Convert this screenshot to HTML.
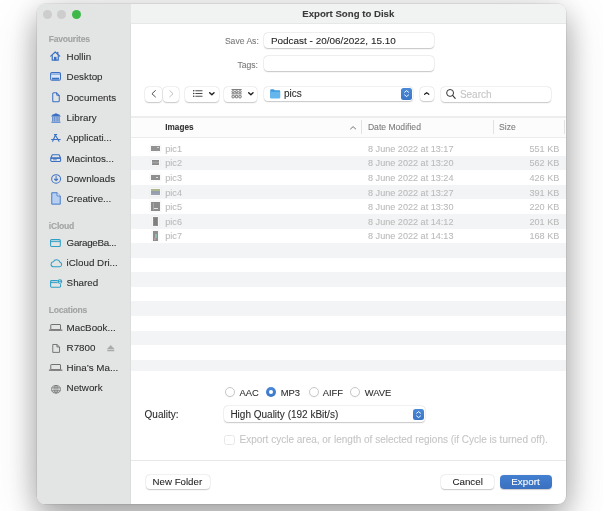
<!DOCTYPE html>
<html><head><meta charset="utf-8"><style>
html,body{margin:0;padding:0;}
body{width:603px;height:511px;position:relative;overflow:hidden;background:#fff;font-family:"Liberation Sans",sans-serif;}
.t{position:absolute;white-space:nowrap;}
#win{will-change:transform;}
.t{-webkit-text-stroke:0.08px currentColor;}
</style></head><body>
<div id="win" style="position:absolute;left:37px;top:4px;width:529px;height:500px;border-radius:8px;overflow:hidden;background:#fff;box-shadow:0 0 0 0.5px rgba(0,0,0,0.13), 0 0 34px rgba(0,0,0,0.08), 0 14px 30px rgba(0,0,0,0.28), 0 12px 56px rgba(0,0,0,0.12);">
<div style="position:absolute;left:-37px;top:-4px;width:603px;height:511px;">
<div style="position:absolute;left:37px;top:4px;width:94px;height:500px;background:#e3e4e4;"></div>
<div style="position:absolute;left:130px;top:24px;width:1px;height:480px;background:#dbdcdc;"></div>
<div style="position:absolute;left:131px;top:4px;width:435px;height:20px;background:#f1f2f2;border-bottom:1px solid #e6e7e7;box-sizing:border-box;"></div>
<div style="position:absolute;left:42.70px;top:9.80px;width:9.2px;height:9.2px;border-radius:50%;background:#cdcdcd;"></div>
<div style="position:absolute;left:57.00px;top:9.80px;width:9.2px;height:9.2px;border-radius:50%;background:#cdcdcd;"></div>
<div style="position:absolute;left:71.60px;top:9.80px;width:9.2px;height:9.2px;border-radius:50%;background:#3fb84a;"></div>
<div class="t" style="left:302.30px;top:9.33px;font-size:9.65px;line-height:9.65px;color:#3a3a3a;font-weight:bold;">Export Song to Disk</div>
<div class="t" style="left:48.80px;top:35.32px;font-size:8.6px;line-height:8.6px;color:#a2a3a3;font-weight:bold;letter-spacing:-0.25px;">Favourites</div>
<div class="t" style="left:48.80px;top:221.72px;font-size:8.6px;line-height:8.6px;color:#a2a3a3;font-weight:bold;letter-spacing:-0.25px;">iCloud</div>
<div class="t" style="left:48.80px;top:305.82px;font-size:8.6px;line-height:8.6px;color:#a2a3a3;font-weight:bold;letter-spacing:-0.25px;">Locations</div>
<div class="t" style="left:66.60px;top:51.80px;font-size:9.8px;line-height:9.8px;color:#2c2c2c;font-weight:normal;">Hollin</div>
<div class="t" style="left:66.60px;top:72.20px;font-size:9.8px;line-height:9.8px;color:#2c2c2c;font-weight:normal;">Desktop</div>
<div class="t" style="left:66.60px;top:92.70px;font-size:9.8px;line-height:9.8px;color:#2c2c2c;font-weight:normal;">Documents</div>
<div class="t" style="left:66.60px;top:112.90px;font-size:9.8px;line-height:9.8px;color:#2c2c2c;font-weight:normal;">Library</div>
<div class="t" style="left:66.60px;top:133.30px;font-size:9.8px;line-height:9.8px;color:#2c2c2c;font-weight:normal;">Applicati...</div>
<div class="t" style="left:66.60px;top:153.80px;font-size:9.8px;line-height:9.8px;color:#2c2c2c;font-weight:normal;">Macintos...</div>
<div class="t" style="left:66.60px;top:173.70px;font-size:9.8px;line-height:9.8px;color:#2c2c2c;font-weight:normal;">Downloads</div>
<div class="t" style="left:66.60px;top:194.40px;font-size:9.8px;line-height:9.8px;color:#2c2c2c;font-weight:normal;">Creative...</div>
<div class="t" style="left:66.60px;top:237.90px;font-size:9.8px;line-height:9.8px;color:#2c2c2c;font-weight:normal;letter-spacing:-0.3px;">GarageBa...</div>
<div class="t" style="left:66.60px;top:258.30px;font-size:9.8px;line-height:9.8px;color:#2c2c2c;font-weight:normal;">iCloud Dri...</div>
<div class="t" style="left:66.60px;top:278.40px;font-size:9.8px;line-height:9.8px;color:#2c2c2c;font-weight:normal;">Shared</div>
<div class="t" style="left:66.60px;top:322.50px;font-size:9.8px;line-height:9.8px;color:#2c2c2c;font-weight:normal;">MacBook...</div>
<div class="t" style="left:66.60px;top:342.80px;font-size:9.8px;line-height:9.8px;color:#2c2c2c;font-weight:normal;">R7800</div>
<div class="t" style="left:66.60px;top:363.00px;font-size:9.8px;line-height:9.8px;color:#2c2c2c;font-weight:normal;">Hina’s Ma...</div>
<div class="t" style="left:66.60px;top:383.30px;font-size:9.8px;line-height:9.8px;color:#2c2c2c;font-weight:normal;">Network</div>
<div class="t" style="left:224.90px;top:36.82px;font-size:8.6px;line-height:8.6px;color:#7a7a7a;font-weight:normal;">Save As:</div>
<div class="t" style="left:237.40px;top:60.52px;font-size:8.6px;line-height:8.6px;color:#7a7a7a;font-weight:normal;">Tags:</div>
<div style="position:absolute;left:264px;top:32.6px;width:169.5px;height:15px;background:#fff;border-radius:4px;box-shadow:0 0 0 0.5px rgba(0,0,0,0.07),0 0.6px 1.3px rgba(0,0,0,0.2);"></div>
<div style="position:absolute;left:264px;top:55.6px;width:169.5px;height:15px;background:#fff;border-radius:4px;box-shadow:0 0 0 0.5px rgba(0,0,0,0.07),0 0.6px 1.3px rgba(0,0,0,0.2);"></div>
<div class="t" style="left:270.90px;top:35.68px;font-size:9.95px;line-height:9.95px;color:#1f1f1f;font-weight:normal;">Podcast - 20/06/2022, 15.10</div>
<div style="position:absolute;left:145.4px;top:86.5px;width:16.6px;height:15px;background:#fff;border-radius:4px;box-shadow:0 0 0 0.5px rgba(0,0,0,0.06),0 0.6px 1.3px rgba(0,0,0,0.2);"></div>
<div style="position:absolute;left:162.7px;top:86.5px;width:16.8px;height:15px;background:#fff;border-radius:4px;box-shadow:0 0 0 0.5px rgba(0,0,0,0.06),0 0.6px 1.3px rgba(0,0,0,0.2);"></div>
<div style="position:absolute;left:185.3px;top:86.5px;width:33.4px;height:15px;background:#fff;border-radius:4px;box-shadow:0 0 0 0.5px rgba(0,0,0,0.06),0 0.6px 1.3px rgba(0,0,0,0.2);"></div>
<div style="position:absolute;left:224.1px;top:86.5px;width:33.4px;height:15px;background:#fff;border-radius:4px;box-shadow:0 0 0 0.5px rgba(0,0,0,0.06),0 0.6px 1.3px rgba(0,0,0,0.2);"></div>
<div style="position:absolute;left:263.6px;top:86.5px;width:149.5px;height:14.8px;background:#fff;border-radius:4px;box-shadow:0 0 0 0.5px rgba(0,0,0,0.06),0 0.6px 1.3px rgba(0,0,0,0.2);"></div>
<div style="position:absolute;left:400.9px;top:88.1px;width:11.1px;height:11.8px;background:linear-gradient(#4a88d8,#3a76c8);border-radius:2.5px;"></div>
<div style="position:absolute;left:420px;top:87px;width:14.2px;height:14px;background:#fff;border-radius:4px;box-shadow:0 0 0 0.5px rgba(0,0,0,0.06),0 0.6px 1.3px rgba(0,0,0,0.2);"></div>
<div style="position:absolute;left:440.6px;top:86.7px;width:110.8px;height:15px;background:#fff;border-radius:4px;box-shadow:0 0 0 0.5px rgba(0,0,0,0.06),0 0.6px 1.3px rgba(0,0,0,0.2);"></div>
<div class="t" style="left:284.00px;top:89.44px;font-size:10px;line-height:10px;color:#2b2b2b;font-weight:normal;">pics</div>
<div class="t" style="left:459.90px;top:89.53px;font-size:10px;line-height:10px;color:#c4c4c4;font-weight:normal;">Search</div>
<div style="position:absolute;left:131px;top:117.5px;width:435px;height:20px;background:#fcfcfc;"></div>
<div style="position:absolute;left:131px;top:116.3px;width:435px;height:1.4px;background:#ededed;"></div>
<div style="position:absolute;left:131px;top:137px;width:435px;height:1px;background:#ececec;"></div>
<div class="t" style="left:165.30px;top:123.96px;font-size:8.2px;line-height:8.2px;color:#333;font-weight:bold;">Images</div>
<div class="t" style="left:367.90px;top:122.92px;font-size:8.6px;line-height:8.6px;color:#7c7c7c;font-weight:normal;">Date Modified</div>
<div class="t" style="left:499.00px;top:122.92px;font-size:8.6px;line-height:8.6px;color:#7c7c7c;font-weight:normal;">Size</div>
<div style="position:absolute;left:361.2px;top:120.3px;width:1px;height:14px;background:#e2e2e2;"></div>
<div style="position:absolute;left:493.3px;top:120.3px;width:1px;height:14px;background:#e2e2e2;"></div>
<div style="position:absolute;left:563.7px;top:120.3px;width:1px;height:14px;background:#e2e2e2;"></div>
<div style="position:absolute;left:131px;top:155.77px;width:435px;height:14.57px;background:#f3f4f5;"></div>
<div style="position:absolute;left:131px;top:184.91px;width:435px;height:14.57px;background:#f3f4f5;"></div>
<div style="position:absolute;left:131px;top:214.05px;width:435px;height:14.57px;background:#f3f4f5;"></div>
<div style="position:absolute;left:131px;top:243.19px;width:435px;height:14.57px;background:#f3f4f5;"></div>
<div style="position:absolute;left:131px;top:272.33px;width:435px;height:14.57px;background:#f3f4f5;"></div>
<div style="position:absolute;left:131px;top:301.47px;width:435px;height:14.57px;background:#f3f4f5;"></div>
<div style="position:absolute;left:131px;top:330.61px;width:435px;height:14.57px;background:#f3f4f5;"></div>
<div style="position:absolute;left:131px;top:359.75px;width:435px;height:11.25px;background:#f3f4f5;"></div>
<div class="t" style="left:165.30px;top:144.90px;font-size:9.1px;line-height:9.1px;color:#bababa;font-weight:normal;">pic1</div>
<div class="t" style="left:368.00px;top:144.90px;font-size:9.1px;line-height:9.1px;color:#bababa;font-weight:normal;">8 June 2022 at 13:17</div>
<div class="t" style="right:43.70px;top:144.90px;font-size:9.1px;line-height:9.1px;color:#bababa;font-weight:normal;">551 KB</div>
<div class="t" style="left:165.30px;top:159.47px;font-size:9.1px;line-height:9.1px;color:#bababa;font-weight:normal;">pic2</div>
<div class="t" style="left:368.00px;top:159.47px;font-size:9.1px;line-height:9.1px;color:#bababa;font-weight:normal;">8 June 2022 at 13:20</div>
<div class="t" style="right:43.70px;top:159.47px;font-size:9.1px;line-height:9.1px;color:#bababa;font-weight:normal;">562 KB</div>
<div class="t" style="left:165.30px;top:174.04px;font-size:9.1px;line-height:9.1px;color:#bababa;font-weight:normal;">pic3</div>
<div class="t" style="left:368.00px;top:174.04px;font-size:9.1px;line-height:9.1px;color:#bababa;font-weight:normal;">8 June 2022 at 13:24</div>
<div class="t" style="right:43.70px;top:174.04px;font-size:9.1px;line-height:9.1px;color:#bababa;font-weight:normal;">426 KB</div>
<div class="t" style="left:165.30px;top:188.61px;font-size:9.1px;line-height:9.1px;color:#bababa;font-weight:normal;">pic4</div>
<div class="t" style="left:368.00px;top:188.61px;font-size:9.1px;line-height:9.1px;color:#bababa;font-weight:normal;">8 June 2022 at 13:27</div>
<div class="t" style="right:43.70px;top:188.61px;font-size:9.1px;line-height:9.1px;color:#bababa;font-weight:normal;">391 KB</div>
<div class="t" style="left:165.30px;top:203.18px;font-size:9.1px;line-height:9.1px;color:#bababa;font-weight:normal;">pic5</div>
<div class="t" style="left:368.00px;top:203.18px;font-size:9.1px;line-height:9.1px;color:#bababa;font-weight:normal;">8 June 2022 at 13:30</div>
<div class="t" style="right:43.70px;top:203.18px;font-size:9.1px;line-height:9.1px;color:#bababa;font-weight:normal;">220 KB</div>
<div class="t" style="left:165.30px;top:217.75px;font-size:9.1px;line-height:9.1px;color:#bababa;font-weight:normal;">pic6</div>
<div class="t" style="left:368.00px;top:217.75px;font-size:9.1px;line-height:9.1px;color:#bababa;font-weight:normal;">8 June 2022 at 14:12</div>
<div class="t" style="right:43.70px;top:217.75px;font-size:9.1px;line-height:9.1px;color:#bababa;font-weight:normal;">201 KB</div>
<div class="t" style="left:165.30px;top:232.32px;font-size:9.1px;line-height:9.1px;color:#bababa;font-weight:normal;">pic7</div>
<div class="t" style="left:368.00px;top:232.32px;font-size:9.1px;line-height:9.1px;color:#bababa;font-weight:normal;">8 June 2022 at 14:13</div>
<div class="t" style="right:43.70px;top:232.32px;font-size:9.1px;line-height:9.1px;color:#bababa;font-weight:normal;">168 KB</div>
<div style="position:absolute;left:151.1px;top:146.0px;width:8.7px;height:5.0px;background:#929292;box-shadow:0 0 0 0.8px #fdfdfd, 0 0 1.2px 1px rgba(0,0,0,0.10);"></div>
<div style="position:absolute;left:156.6px;top:146.9px;width:2.6px;height:1.4px;background:#d2d2d2;filter:blur(0.3px);"></div>
<div style="position:absolute;left:152.1px;top:160.2px;width:6.8px;height:5.1px;background:linear-gradient(#8a8a8a 0,#8a8a8a 25%,#a3a3a3 40%,#a3a3a3 60%,#8a8a8a 75%);box-shadow:0 0 0 0.8px #fdfdfd, 0 0 1.2px 1px rgba(0,0,0,0.10);"></div>
<div style="position:absolute;left:150.9px;top:175.0px;width:9.1px;height:4.7px;background:#8f8f8f;box-shadow:0 0 0 0.8px #fdfdfd, 0 0 1.2px 1px rgba(0,0,0,0.10);"></div>
<div style="position:absolute;left:155.9px;top:176.5px;width:2.2px;height:1.4px;background:#e0e0e0;"></div>
<div style="position:absolute;left:150.9px;top:189.0px;width:9.2px;height:6.1px;background:linear-gradient(#a9b48e 0,#b1b890 30%,#8f9ab0 45%,#9aa3b3 75%,#a0a0a6 100%);box-shadow:0 0 0 0.8px #fdfdfd, 0 0 1.2px 1px rgba(0,0,0,0.10);"></div>
<div style="position:absolute;left:151.2px;top:201.9px;width:8.6px;height:9.0px;background:#8c8c8c;box-shadow:0 0 0 0.8px #fdfdfd, 0 0 1.2px 1px rgba(0,0,0,0.10);"></div>
<div style="position:absolute;left:152.8px;top:203.0px;width:0.9px;height:6.8px;background:#8fb89a;"></div>
<div style="position:absolute;left:154.4px;top:207.8px;width:3.8px;height:1.3px;background:#e2e2e2;"></div>
<div style="position:absolute;left:152.8px;top:216.8px;width:5.1px;height:9.4px;background:#8e8e8e;box-shadow:0 0 0 0.8px #fdfdfd, 0 0 1.2px 1px rgba(0,0,0,0.10);"></div>
<div style="position:absolute;left:154.0px;top:218.0px;width:2.8px;height:7.0px;background:#7f7f7f;"></div>
<div style="position:absolute;left:152.8px;top:230.9px;width:5.2px;height:9.8px;background:#8e8e8e;box-shadow:0 0 0 0.8px #fdfdfd, 0 0 1.2px 1px rgba(0,0,0,0.10);"></div>
<div style="position:absolute;left:155.2px;top:233.5px;width:1.6px;height:4.8px;background:#8fbcaa;"></div>
<div style="position:absolute;left:154.0px;top:238.0px;width:2.2px;height:1.6px;background:#b59aa6;"></div>
<div style="position:absolute;left:131px;top:460px;width:435px;height:1px;background:#e8e8e8;"></div>
<div style="position:absolute;left:224.9px;top:387.2px;width:10px;height:10px;border-radius:50%;box-sizing:border-box;border:0.7px solid #c9c9c9;background:#fff;box-shadow:0 0.5px 0.8px rgba(0,0,0,0.08);"></div>
<div class="t" style="left:239.50px;top:387.84px;font-size:9.4px;line-height:9.4px;color:#2b2b2b;font-weight:normal;">AAC</div>
<div style="position:absolute;left:266px;top:387.2px;width:10px;height:10px;border-radius:50%;background:linear-gradient(#4a88d8,#3a76c8);"></div>
<div style="position:absolute;left:269.1px;top:390.3px;width:3.8px;height:3.8px;border-radius:50%;background:#fff;"></div>
<div class="t" style="left:280.70px;top:387.84px;font-size:9.4px;line-height:9.4px;color:#2b2b2b;font-weight:normal;">MP3</div>
<div style="position:absolute;left:308.8px;top:387.2px;width:10px;height:10px;border-radius:50%;box-sizing:border-box;border:0.7px solid #c9c9c9;background:#fff;box-shadow:0 0.5px 0.8px rgba(0,0,0,0.08);"></div>
<div class="t" style="left:322.70px;top:387.84px;font-size:9.4px;line-height:9.4px;color:#2b2b2b;font-weight:normal;">AIFF</div>
<div style="position:absolute;left:349.5px;top:387.2px;width:10px;height:10px;border-radius:50%;box-sizing:border-box;border:0.7px solid #c9c9c9;background:#fff;box-shadow:0 0.5px 0.8px rgba(0,0,0,0.08);"></div>
<div class="t" style="left:364.80px;top:387.84px;font-size:9.4px;line-height:9.4px;color:#2b2b2b;font-weight:normal;">WAVE</div>
<div class="t" style="left:144.60px;top:409.64px;font-size:10px;line-height:10px;color:#2b2b2b;font-weight:normal;">Quality:</div>
<div style="position:absolute;left:224.2px;top:406.3px;width:201px;height:15.3px;background:#fff;border-radius:4px;box-shadow:0 0 0 0.5px rgba(0,0,0,0.06),0 0.6px 1.3px rgba(0,0,0,0.2);"></div>
<div style="position:absolute;left:412.5px;top:408.6px;width:11.5px;height:11.6px;background:linear-gradient(#4a88d8,#3a76c8);border-radius:2.5px;"></div>
<div class="t" style="left:230.40px;top:409.64px;font-size:10px;line-height:10px;color:#2b2b2b;font-weight:normal;">High Quality (192 kBit/s)</div>
<div style="position:absolute;left:224.2px;top:434.5px;width:10.5px;height:10.5px;border-radius:2.5px;box-sizing:border-box;border:0.7px solid #e8e8e8;background:#fff;"></div>
<div class="t" style="left:239.50px;top:434.84px;font-size:10px;line-height:10px;color:#c5c5c5;font-weight:normal;">Export cycle area, or length of selected regions (if Cycle is turned off).</div>
<div style="position:absolute;left:145.7px;top:474.7px;width:64.3px;height:14.7px;background:#fff;border-radius:4px;box-shadow:0 0 0 0.5px rgba(0,0,0,0.06),0 0.6px 1.3px rgba(0,0,0,0.2);"></div>
<div class="t" style="left:152.60px;top:477.09px;font-size:9.7px;line-height:9.7px;color:#252525;font-weight:normal;">New Folder</div>
<div style="position:absolute;left:441.4px;top:474.7px;width:52.9px;height:14.7px;background:#fff;border-radius:4px;box-shadow:0 0 0 0.5px rgba(0,0,0,0.06),0 0.6px 1.3px rgba(0,0,0,0.2);"></div>
<div class="t" style="left:452.40px;top:477.00px;font-size:9.8px;line-height:9.8px;color:#252525;font-weight:normal;">Cancel</div>
<div style="position:absolute;left:499.7px;top:474.7px;width:52.5px;height:14.7px;background:linear-gradient(#4480d0,#3a70c0);border-radius:4px;box-shadow:0 0.5px 1px rgba(0,0,0,0.2);"></div>
<div class="t" style="left:511.30px;top:477.00px;font-size:9.8px;line-height:9.8px;color:#ffffff;font-weight:normal;">Export</div>
<svg style="position:absolute;left:50.3px;top:50.9px;width:10.5px;height:9.8px;overflow:visible" viewBox="0 0 21 20" preserveAspectRatio="none"><path d="M1.5 10.5 L10.5 2 L19.5 10.5" fill="none" stroke="#3a70c4" stroke-width="2.4" stroke-linecap="round" stroke-linejoin="round"/><path d="M15.5 2.5 v4.5" stroke="#3a70c4" stroke-width="2.4" stroke-linecap="round"/><path d="M4.5 8.5 V18.8 H16.5 V8.5" fill="none" stroke="#3a70c4" stroke-width="2.4" stroke-linejoin="round"/><rect x="8" y="12" width="5" height="7" fill="#3a70c4"/></svg>
<svg style="position:absolute;left:50.3px;top:72px;width:11.1px;height:8.9px;overflow:visible" viewBox="0 0 22 18" preserveAspectRatio="none"><rect x="1.2" y="1.2" width="19.6" height="15.6" rx="2.5" fill="#dbe7f7" stroke="#3a70c4" stroke-width="2"/><path d="M1.2 4.2 H20.8" stroke="#3a70c4" stroke-width="1.6"/><rect x="4" y="11.6" width="14" height="3.8" fill="#3a70c4"/></svg>
<svg style="position:absolute;left:52px;top:92px;width:8px;height:10.6px;overflow:visible" viewBox="0 0 16 21" preserveAspectRatio="none"><path d="M3.5 1.5 H9 L14.5 7 V17.5 Q14.5 19.5 12.5 19.5 H3.5 Q1.5 19.5 1.5 17.5 V3.5 Q1.5 1.5 3.5 1.5 Z" fill="none" stroke="#3a70c4" stroke-width="2.1" stroke-linejoin="round"/><path d="M9 1.5 V5 Q9 7 11 7 H14.5" fill="none" stroke="#3a70c4" stroke-width="1.9" stroke-linejoin="round"/></svg>
<svg style="position:absolute;left:50.9px;top:112.7px;width:9.9px;height:10px;overflow:visible" viewBox="0 0 20 20" preserveAspectRatio="none"><path d="M10 0.5 Q15 2 19.4 5.8 V7 H0.6 V5.8 Q5 2 10 0.5 Z" fill="#3a70c4"/><rect x="2.6" y="7" width="2.3" height="10" fill="#3a70c4"/><rect x="6.7" y="7" width="2.3" height="10" fill="#3a70c4"/><rect x="11" y="7" width="2.3" height="10" fill="#3a70c4"/><rect x="15.1" y="7" width="2.3" height="10" fill="#3a70c4"/><rect x="0.8" y="17.2" width="18.4" height="2.6" fill="#5f8ad0"/></svg>
<svg style="position:absolute;left:50.8px;top:134px;width:9.8px;height:8px;overflow:visible" viewBox="0 0 20 16" preserveAspectRatio="none"><path d="M7 1.2 H11.6 M9.6 1.2 L3.4 14.6 M10.2 4.6 L16.4 14.6 M1.2 11 H18.8" fill="none" stroke="#3a70c4" stroke-width="2.3" stroke-linecap="round" stroke-linejoin="round"/></svg>
<svg style="position:absolute;left:50.3px;top:154.4px;width:11.4px;height:8.2px;overflow:visible" viewBox="0 0 22 16" preserveAspectRatio="none"><path d="M4.5 1.5 H17.5 L20.5 8 H1.5 Z" fill="none" stroke="#3a70c4" stroke-width="2.1" stroke-linejoin="round"/><rect x="1.5" y="8" width="19" height="6.5" rx="2" fill="none" stroke="#3a70c4" stroke-width="2.1"/><path d="M6 11.3 H13" stroke="#3a70c4" stroke-width="1.6"/></svg>
<svg style="position:absolute;left:50.9px;top:173.9px;width:10.2px;height:9.8px;overflow:visible" viewBox="0 0 20 20" preserveAspectRatio="none"><circle cx="10" cy="10" r="8.7" fill="none" stroke="#3a70c4" stroke-width="2"/><path d="M10 5 V13.5 M6.8 10.5 L10 13.7 L13.2 10.5" fill="none" stroke="#3a70c4" stroke-width="2.1" stroke-linecap="round" stroke-linejoin="round"/></svg>
<svg style="position:absolute;left:51.1px;top:192.3px;width:10px;height:12.9px;overflow:visible" viewBox="0 0 20 26" preserveAspectRatio="none"><path d="M1.5 1.5 H12 L18.5 8 V24.5 H1.5 Z" fill="#b7cff0" stroke="#3a70c4" stroke-width="1.8" stroke-linejoin="round"/><path d="M12 1.5 V8 H18.5" fill="#e4edf9" stroke="#3a70c4" stroke-width="1.5" stroke-linejoin="round"/></svg>
<svg style="position:absolute;left:50.3px;top:238.7px;width:10.9px;height:8px;overflow:visible" viewBox="0 0 22 16" preserveAspectRatio="none"><rect x="1.2" y="1.2" width="19.6" height="13.6" rx="2" fill="none" stroke="#2d9ec6" stroke-width="2.1"/><path d="M1.2 5.2 H20.8" stroke="#2d9ec6" stroke-width="1.9"/></svg>
<svg style="position:absolute;left:49.7px;top:258.6px;width:12.3px;height:8.3px;overflow:visible" viewBox="0 0 24 16" preserveAspectRatio="none"><path d="M6 15 H18.5 A4.5 4.5 0 0 0 19.5 6.2 A7 7 0 0 0 6.5 5.5 A4.8 4.8 0 0 0 6 15 Z" fill="none" stroke="#2d9ec6" stroke-width="2" stroke-linejoin="round"/></svg>
<svg style="position:absolute;left:50.3px;top:279.2px;width:12.3px;height:8.8px;overflow:visible" viewBox="0 0 24 17" preserveAspectRatio="none"><path d="M15 3.2 H3 Q1.2 3.2 1.2 5 V14 Q1.2 15.8 3 15.8 H18.8 Q20.6 15.8 20.6 14 V10" fill="none" stroke="#2d9ec6" stroke-width="2.1" stroke-linejoin="round"/><path d="M1.2 7 H15" stroke="#2d9ec6" stroke-width="1.9"/><circle cx="19.3" cy="4.8" r="4.4" fill="#2d9ec6"/><circle cx="19.3" cy="3.6" r="1.4" fill="#fff"/><path d="M16.9 7.4 Q19.3 4.6 21.7 7.4 Z" fill="#fff"/></svg>
<svg style="position:absolute;left:48.9px;top:324px;width:13.3px;height:6.8px;overflow:visible" viewBox="0 0 26 13" preserveAspectRatio="none"><rect x="3.5" y="1" width="19" height="10" rx="1" fill="none" stroke="#6e6e6e" stroke-width="1.9"/><path d="M0.8 11.8 H25.2" stroke="#6e6e6e" stroke-width="2.1" stroke-linecap="round"/></svg>
<svg style="position:absolute;left:48.9px;top:364.2px;width:13.3px;height:6.8px;overflow:visible" viewBox="0 0 26 13" preserveAspectRatio="none"><rect x="3.5" y="1" width="19" height="10" rx="1" fill="none" stroke="#6e6e6e" stroke-width="1.9"/><path d="M0.8 11.8 H25.2" stroke="#6e6e6e" stroke-width="2.1" stroke-linecap="round"/></svg>
<svg style="position:absolute;left:52px;top:343.8px;width:8.3px;height:8.9px;overflow:visible" viewBox="0 0 16 18" preserveAspectRatio="none"><path d="M1.5 1 H9.5 L14.5 6 V17 H1.5 Z M9.5 1 V6 H14.5" fill="none" stroke="#6e6e6e" stroke-width="1.8" stroke-linejoin="round"/></svg>
<svg style="position:absolute;left:106.9px;top:344.6px;width:7.5px;height:6.3px;overflow:visible" viewBox="0 0 15 13" preserveAspectRatio="none"><path d="M7.5 0.3 L14.5 8.2 H0.5 Z" fill="#a9a9a9" stroke="#a9a9a9" stroke-width="0.6" stroke-linejoin="round"/><rect x="0.5" y="10" width="14" height="2.8" rx="0.5" fill="#a9a9a9"/></svg>
<svg style="position:absolute;left:51px;top:384.5px;width:10px;height:8.6px;overflow:visible" viewBox="0 0 20 18" preserveAspectRatio="none"><ellipse cx="10" cy="9" rx="8.8" ry="8" fill="none" stroke="#6e6e6e" stroke-width="1.6"/><ellipse cx="10" cy="9" rx="4" ry="8" fill="none" stroke="#6e6e6e" stroke-width="1.4"/><path d="M1.5 6 H18.5 M1.5 12 H18.5 M10 1 V17" stroke="#6e6e6e" stroke-width="1.4"/></svg>
<svg style="position:absolute;left:150.7px;top:90.4px;width:5.2px;height:7.5px;overflow:visible" viewBox="0 0 10 15" preserveAspectRatio="none"><path d="M8.5 1.2 L1.8 7.5 L8.5 13.8" fill="none" stroke="#4a4a4a" stroke-width="1.9" stroke-linecap="round" stroke-linejoin="round"/></svg>
<svg style="position:absolute;left:168.9px;top:90.4px;width:4.9px;height:7.5px;overflow:visible" viewBox="0 0 10 15" preserveAspectRatio="none"><path d="M1.5 1.2 L8.2 7.5 L1.5 13.8" fill="none" stroke="#bdbdbd" stroke-width="1.9" stroke-linecap="round" stroke-linejoin="round"/></svg>
<svg style="position:absolute;left:192.7px;top:90.0px;width:9.6px;height:7.0px;overflow:visible" viewBox="0 0 19 14" preserveAspectRatio="none"><path d="M1.4 1.5 H1.6 M1.4 7 H1.6 M1.4 12.5 H1.6" fill="none" stroke="#2a2a2a" stroke-width="2.6" stroke-linecap="round"/><path d="M5.5 1.5 H18 M5.5 7 H18 M5.5 12.5 H18" fill="none" stroke="#2f2f2f" stroke-width="1.7" stroke-linecap="round"/></svg>
<svg style="position:absolute;left:208.9px;top:92.4px;width:5.7px;height:3.4px;overflow:visible" viewBox="0 0 11 6.5" preserveAspectRatio="none"><path d="M1.3 1.3 L5.5 5.2 L9.7 1.3" fill="none" stroke="#1e1e1e" stroke-width="2.7" stroke-linecap="round" stroke-linejoin="round"/></svg>
<svg style="position:absolute;left:247.5px;top:92.4px;width:5.7px;height:3.4px;overflow:visible" viewBox="0 0 11 6.5" preserveAspectRatio="none"><path d="M1.3 1.3 L5.5 5.2 L9.7 1.3" fill="none" stroke="#1e1e1e" stroke-width="2.7" stroke-linecap="round" stroke-linejoin="round"/></svg>
<svg style="position:absolute;left:231px;top:89px;width:11.2px;height:9.6px;overflow:visible" viewBox="0 0 22 19" preserveAspectRatio="none"><path d="M1 1 H21 M1 9.5 H21" stroke="#4a4a4a" stroke-width="1.4"/><rect x="2" y="3.5" width="4.5" height="3.6" rx="1" fill="none" stroke="#4a4a4a" stroke-width="1.4"/><rect x="8.75" y="3.5" width="4.5" height="3.6" rx="1" fill="none" stroke="#4a4a4a" stroke-width="1.4"/><rect x="15.5" y="3.5" width="4.5" height="3.6" rx="1" fill="none" stroke="#4a4a4a" stroke-width="1.4"/><rect x="2" y="12.5" width="4.5" height="5" rx="1.2" fill="none" stroke="#4a4a4a" stroke-width="1.5"/><rect x="8.75" y="12.5" width="4.5" height="5" rx="1.2" fill="none" stroke="#4a4a4a" stroke-width="1.5"/><rect x="15.5" y="12.5" width="4.5" height="5" rx="1.2" fill="none" stroke="#4a4a4a" stroke-width="1.5"/></svg>
<svg style="position:absolute;left:269.7px;top:89.3px;width:10.4px;height:9.6px;overflow:visible" viewBox="0 0 21 19" preserveAspectRatio="none"><path d="M0.5 2 Q0.5 0.5 2 0.5 H7.5 L9.5 2.5 H19 Q20.5 2.5 20.5 4 V17 Q20.5 18.5 19 18.5 H2 Q0.5 18.5 0.5 17 Z" fill="#3f9adc"/><path d="M0.5 5.5 H20.5 V17 Q20.5 18.5 19 18.5 H2 Q0.5 18.5 0.5 17 Z" fill="#64b6ec"/></svg>
<svg style="position:absolute;left:403.84999999999997px;top:90.4px;width:5.2px;height:7.2px;overflow:visible" viewBox="0 0 10 14" preserveAspectRatio="none"><path d="M1.3 4.3 L5 1.2 L8.7 4.3 M1.3 9.7 L5 12.8 L8.7 9.7" fill="none" stroke="#fff" stroke-width="1.9" stroke-linecap="round" stroke-linejoin="round"/></svg>
<svg style="position:absolute;left:415.65px;top:410.8px;width:5.2px;height:7.2px;overflow:visible" viewBox="0 0 10 14" preserveAspectRatio="none"><path d="M1.3 4.3 L5 1.2 L8.7 4.3 M1.3 9.7 L5 12.8 L8.7 9.7" fill="none" stroke="#fff" stroke-width="1.9" stroke-linecap="round" stroke-linejoin="round"/></svg>
<svg style="position:absolute;left:424.1px;top:92.3px;width:5.4px;height:2.9px;overflow:visible" viewBox="0 0 11 6" preserveAspectRatio="none"><path d="M1.2 4.8 L5.5 1.2 L9.8 4.8" fill="none" stroke="#1e1e1e" stroke-width="2.4" stroke-linecap="round" stroke-linejoin="round"/></svg>
<svg style="position:absolute;left:445.5px;top:89px;width:10px;height:10px;overflow:visible" viewBox="0 0 20 20" preserveAspectRatio="none"><circle cx="8.2" cy="7.9" r="6.9" fill="none" stroke="#333" stroke-width="2"/><path d="M13.2 12.9 L18.4 18.6" stroke="#333" stroke-width="2.2" stroke-linecap="round"/></svg>
<svg style="position:absolute;left:349.6px;top:125.8px;width:6.2px;height:3.5px;overflow:visible" viewBox="0 0 12 7" preserveAspectRatio="none"><path d="M1 6 L6 1.3 L11 6" fill="none" stroke="#6a6a6a" stroke-width="1.8" stroke-linecap="round" stroke-linejoin="round"/></svg>
</div></div>
</body></html>
